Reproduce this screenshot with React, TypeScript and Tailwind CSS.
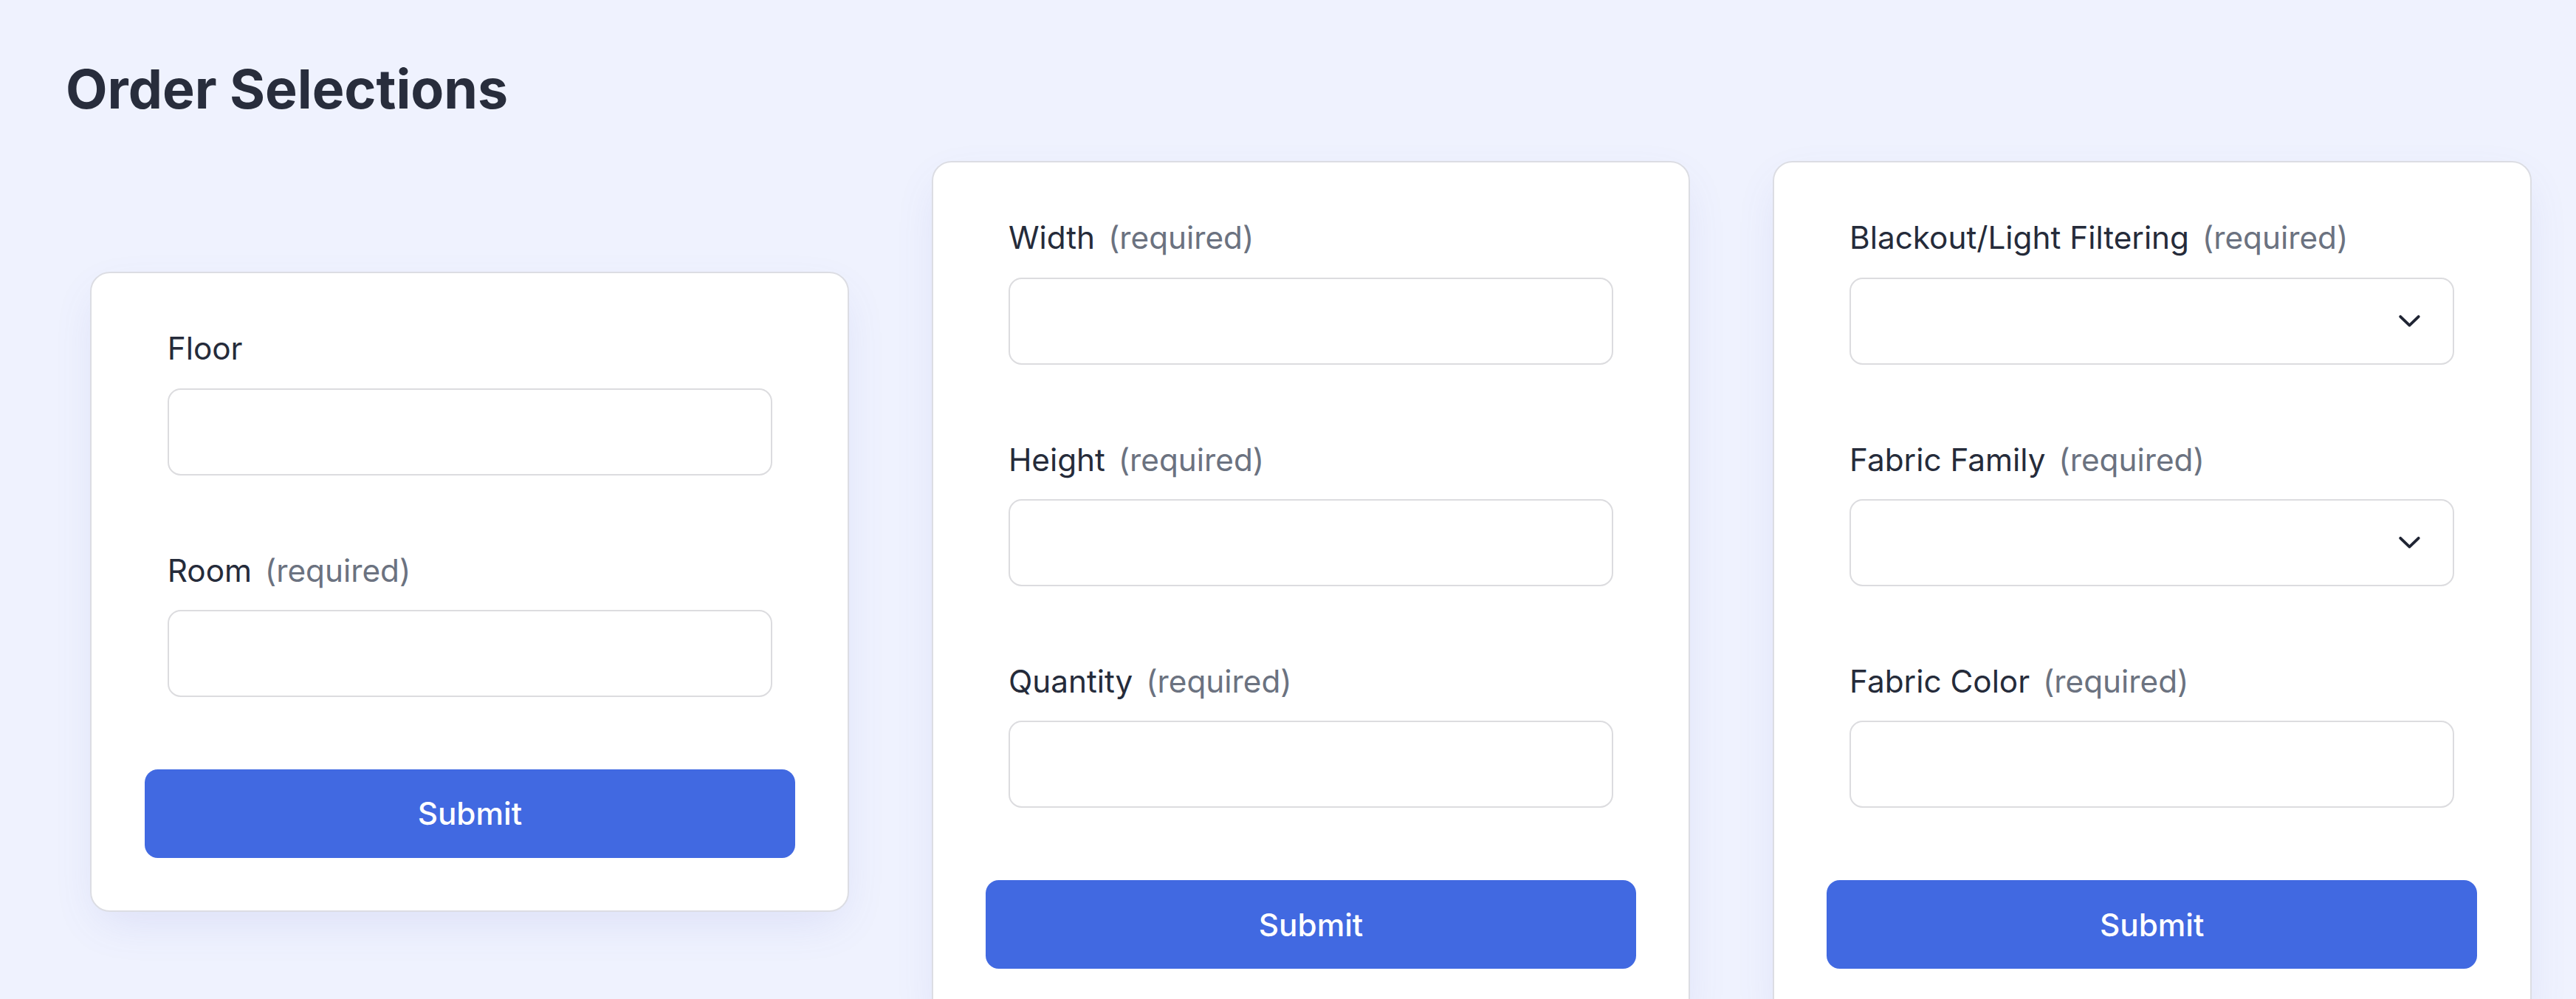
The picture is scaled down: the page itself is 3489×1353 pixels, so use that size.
import React from 'react';

type Field = {
  label: string;
  required?: boolean;
  select?: boolean;
};

const cards: Field[][] = [
  [{ label: 'Floor' }, { label: 'Room', required: true }],
  [
    { label: 'Width', required: true },
    { label: 'Height', required: true },
    { label: 'Quantity', required: true },
  ],
  [
    { label: 'Blackout/Light Filtering', required: true, select: true },
    { label: 'Fabric Family', required: true, select: true },
    { label: 'Fabric Color', required: true },
  ],
];

function Chevron() {
  return (
    <svg
      width="13"
      height="8"
      viewBox="0 0 13 8"
      fill="none"
      className="pointer-events-none absolute right-[21px] top-1/2 -translate-y-1/2"
    >
      <path
        d="M1 1.2l5.5 5.3L12 1.2"
        stroke="#1f2433"
        strokeWidth="1.7"
        strokeLinecap="round"
        strokeLinejoin="round"
      />
    </svg>
  );
}

function FormField({ field }: { field: Field }) {
  return (
    <div className="mx-3.5">
      <label className="block text-[19px] leading-7 text-[#252b3a]">
        {field.label}
        {field.required && <span className="ml-2 text-[#6b7280]">(required)</span>}
      </label>
      {field.select ? (
        <div className="relative mt-2.5">
          <select className="block h-[53px] w-full appearance-none rounded-lg border border-[#dcdcdf] bg-white px-3 text-lg outline-none">
            <option value=""></option>
          </select>
          <Chevron />
        </div>
      ) : (
        <input
          type="text"
          className="mt-2.5 block h-[53px] w-full rounded-lg border border-[#dcdcdf] bg-white px-3 text-lg outline-none"
        />
      )}
    </div>
  );
}

function Card({ fields }: { fields: Field[] }) {
  return (
    <div className="w-[462px] shrink-0 rounded-xl border border-[#dcdde3] bg-white p-8 shadow-[0_10px_28px_-6px_rgba(90,100,200,0.14)]">
      <form className="flex flex-col gap-11" onSubmit={(e) => e.preventDefault()}>
        {fields.map((f) => (
          <FormField key={f.label} field={f} />
        ))}
        <button
          type="submit"
          className="h-[54px] w-full rounded-lg bg-[#4169e1] text-[19px] font-medium text-white"
        >
          Submit
        </button>
      </form>
    </div>
  );
}

export default function App() {
  return (
    <div className="h-screen overflow-hidden bg-[#eff2fe] font-['Inter','Noto_Sans',sans-serif]">
      <div className="px-10 pt-[34px] [zoom:2.225]">
        <h1 className="text-[33px] font-bold leading-[40px] text-[#282d3c]">Order Selections</h1>
        <div className="mt-6 flex items-center gap-[50px] pl-[15px]">
          {cards.map((fields, i) => (
            <Card key={i} fields={fields} />
          ))}
        </div>
      </div>
    </div>
  );
}
